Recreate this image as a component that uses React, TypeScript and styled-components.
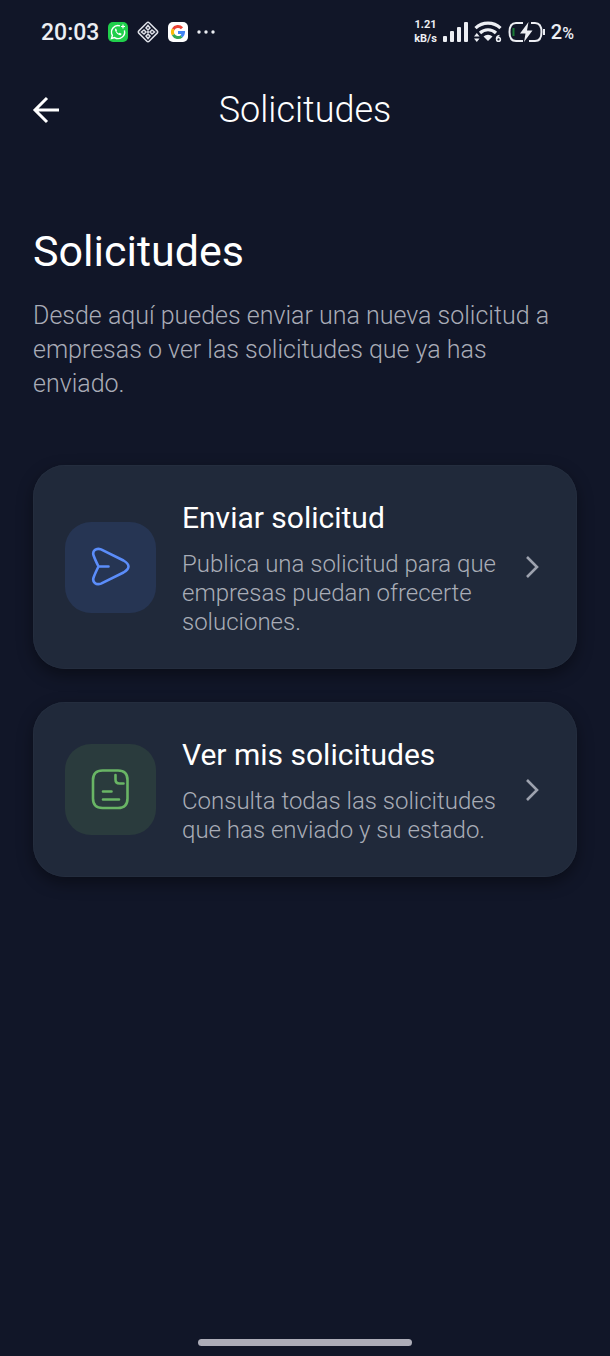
import React from "react";
import styled, { createGlobalStyle } from "styled-components";

const GlobalStyle = createGlobalStyle`
  * { box-sizing: border-box; }
  body {
    margin: 0;
    background: #111628;
    color: #fff;
    font-family: Roboto, "Liberation Sans", sans-serif;
  }
`;

const Screen = styled.div`
  display: flex;
  flex-direction: column;
  min-height: 100vh;
`;

const StatusBar = styled.div`
  display: flex;
  align-items: center;
  justify-content: space-between;
  height: 64px;
  padding: 0 36px 0 41px;
  color: #eceef3;
`;

const StatusGroup = styled.div<{ $gap: number }>`
  display: flex;
  align-items: center;
  gap: ${(p) => p.$gap}px;
`;

const Clock = styled.time`
  font-size: 23px;
  font-weight: 500;
`;

const Speed = styled.div`
  font-size: 11px;
  line-height: 14px;
  font-weight: 700;
  text-align: center;
`;

const Battery = styled.span`
  font-size: 20px;
  font-weight: 500;
  small {
    font-size: 16px;
  }
`;

const AppBar = styled.header`
  display: grid;
  grid-template-columns: 48px 1fr 48px;
  align-items: center;
  height: 92px;
  padding: 0 22px;
`;

const BackButton = styled.button`
  display: flex;
  align-items: center;
  justify-content: center;
  height: 48px;
  padding: 0;
  border: 0;
  background: none;
  color: #fff;
`;

const BarTitle = styled.div`
  font-size: 36px;
  font-weight: 300;
  line-height: 44px;
  text-align: center;
`;

const Main = styled.main`
  display: flex;
  flex: 1;
  flex-direction: column;
  padding: 69px 33px 0;
`;

const Heading = styled.h1`
  margin: 0;
  font-size: 43px;
  line-height: 52px;
  font-weight: 400;
`;

const Intro = styled.p`
  margin: 22px 0 64px;
  color: #a9acb7;
  font-size: 25px;
  line-height: 34px;
  font-weight: 300;
`;

const CardList = styled.nav`
  display: flex;
  flex-direction: column;
  gap: 33px;
`;

const Card = styled.a`
  display: flex;
  align-items: center;
  gap: 18px;
  padding: 32px;
  border-radius: 32px;
  background: #20293a;
  box-shadow: inset 0 0 0 1px #242d3e, 0 6px 16px rgba(0, 0, 0, 0.4);
  color: inherit;
  text-decoration: none;
`;

const IconTile = styled.span<{ $background: string; $color: string }>`
  display: flex;
  flex: none;
  align-items: center;
  justify-content: center;
  width: 91px;
  height: 91px;
  margin-right: 8px;
  border-radius: 26px;
  background: ${(p) => p.$background};
  color: ${(p) => p.$color};
`;

const CardText = styled.span`
  flex: 1;
  min-width: 0;
`;

const CardTitle = styled.span`
  display: block;
  margin-bottom: 11px;
  font-size: 30px;
  line-height: 42px;
  font-weight: 400;
`;

const CardDescription = styled.span`
  display: block;
  color: #a9adb7;
  font-size: 24px;
  line-height: 29px;
  font-weight: 300;
`;

const HomeIndicator = styled.div`
  align-self: center;
  width: 35%;
  height: 7px;
  margin-bottom: 10px;
  border-radius: 4px;
  background: #adadb8;
`;

const WhatsAppIcon = () => (
  <svg width="20" height="20" viewBox="0 0 20 20" fill="none" aria-hidden="true">
    <rect width="20" height="20" rx="5" fill="#20cf4b" />
    <path d="M12 3.8A6.6 6.6 0 0 0 4.4 13.4L3.5 16.5l3.1-.9A6.6 6.6 0 0 0 16.4 8.3" stroke="#fff" strokeWidth="1.4" />
    <path d="M7.1 6.8l1-.3.9 1.9-.6.8c.6 1.1 1.3 1.8 2.4 2.3l.8-.8 1.9 1-.3 1.2c-2.1 1.5-6.7-2.6-6.1-6.1z" fill="#fff" />
    <path d="M15 2.5v4M13 4.5h4" stroke="#fff" strokeWidth="1.2" />
  </svg>
);

const DiamondIcon = () => (
  <svg width="22" height="22" viewBox="0 0 22 22" fill="none" stroke="#dfe1e8" aria-hidden="true">
    <path d="M9.9 1.8 1.8 9.9a1.5 1.5 0 0 0 0 2.2l8.1 8.1a1.5 1.5 0 0 0 2.2 0l8.1-8.1a1.5 1.5 0 0 0 0-2.2l-8.1-8.1a1.5 1.5 0 0 0-2.2 0z" strokeWidth="1.5" />
    <path d="M11 4.5 13 7l-2 2-2-2zM11 13l2 2-2 2.5L9 15zM7 9l2 2-2 2-2.5-2zM15 9l2.5 2-2.5 2-2-2z" strokeWidth="1.5" />
    <circle cx="11" cy="11" r="0.8" fill="#dfe1e8" />
  </svg>
);

const GoogleIcon = () => (
  <svg width="20" height="20" viewBox="0 0 20 20" fill="none" strokeWidth="3" aria-hidden="true">
    <rect width="20" height="20" rx="5" fill="#fff" />
    <path d="M14 6.2A5.6 5.6 0 0 0 5.2 7.2" stroke="#ea4335" />
    <path d="M5.2 7.2a5.6 5.6 0 0 0 0 5.6" stroke="#fbbc05" />
    <path d="M5.2 12.8a5.6 5.6 0 0 0 8.4 1.5" stroke="#34a853" />
    <path d="M13.6 14.3A5.6 5.6 0 0 0 15.5 10.4H10" stroke="#4285f4" />
  </svg>
);

const MoreIcon = () => (
  <svg width="18" height="4" viewBox="0 0 18 4" fill="currentColor" aria-hidden="true">
    <circle cx="2" cy="2" r="1.7" />
    <circle cx="9" cy="2" r="1.7" />
    <circle cx="16" cy="2" r="1.7" />
  </svg>
);

const SignalIcon = () => (
  <svg width="25" height="20" viewBox="0 0 25 20" fill="currentColor" aria-hidden="true">
    <rect x="0" y="14" width="4" height="6" rx="1" />
    <rect x="7" y="9" width="4" height="11" rx="1" />
    <rect x="14" y="5" width="4" height="15" rx="1" />
    <rect x="21" y="0" width="4" height="20" rx="1" />
  </svg>
);

const WifiIcon = () => (
  <svg width="28" height="22" viewBox="0 0 28 22" fill="none" stroke="currentColor" aria-hidden="true">
    <path d="M1.5 7.2a18 18 0 0 1 25 0" strokeWidth="3.2" />
    <path d="M6 12a11.5 11.5 0 0 1 16 0" strokeWidth="3.2" />
    <path d="M9.5 15.5a6.5 6.5 0 0 1 9 0L14 20z" fill="currentColor" stroke="none" />
    <path d="M0 15.5 2.8 12l2.8 3.5zM0 17.5l2.8 3.5 2.8-3.5z" fill="currentColor" stroke="none" />
    <path d="M25.5 14.6c-2 .3-3 1.6-3 3.5" strokeWidth="1.5" />
    <circle cx="24.5" cy="18.4" r="1.9" strokeWidth="1.5" />
  </svg>
);

const BatteryIcon = () => (
  <svg width="37" height="22" viewBox="0 0 37 22" fill="none" stroke="currentColor" aria-hidden="true">
    <path d="M15 2H8Q1.5 2 1.5 11T8 20h7M23 2h4q6.5 0 6.5 9T27 20h-6" strokeWidth="2" />
    <path d="M36 8v6" strokeWidth="2" />
    <path d="M5.5 7v8" stroke="#197b35" strokeWidth="2" />
    <path d="M20.5 1 12 12.5h5.5L16 21l8.5-11.5H19z" fill="currentColor" stroke="none" />
  </svg>
);

const BackIcon = () => (
  <svg width="28" height="28" viewBox="0 0 28 28" fill="none" stroke="currentColor" strokeWidth="3" aria-hidden="true">
    <path d="M27 14H3M15 2 3 14l12 12" />
  </svg>
);

const SendIcon = () => (
  <svg width="40" height="40" viewBox="0 0 40 40" fill="none" stroke="currentColor" strokeWidth="2.6" strokeLinecap="round" strokeLinejoin="round" aria-hidden="true">
    <path d="M10 2.4 32.5 13.5Q42.500 19.500 32.500 25.500L10 36.600C5 38.500 1 35 2.600 30.500Q4 26.500 7.500 19.500 4 12.500 2.600 8.500C1 4 5 .5 10 2.400zM7.500 19.500h10" />
  </svg>
);

const DocumentIcon = () => (
  <svg width="40" height="42" viewBox="0 0 40 42" fill="none" stroke="currentColor" strokeWidth="2.6" strokeLinecap="round" strokeLinejoin="round" aria-hidden="true">
    <path d="M11.500 1.500h15.500q9.500 0 9.500 9.500v18.500q0 9.500-9.500 9.500H11.500q-9.500 0-9.500-9.500V11Q2 1.500 11.500 1.500z" />
    <path d="M24.500 6v4.500q0 4 4 4h4M12 22.500h8.500M12 30.500h16" />
  </svg>
);

const ChevronIcon = () => (
  <svg width="20" height="24" viewBox="0 0 20 24" fill="none" stroke="#9da2ae" strokeWidth="2.6" aria-hidden="true">
    <path d="M2 2 12 12 2 22" />
  </svg>
);

interface ActionCardProps {
  title: string;
  description: string;
  background: string;
  color: string;
  icon: React.ReactNode;
}

const ActionCard = ({ title, description, background, color, icon }: ActionCardProps) => (
  <Card href="#">
    <IconTile $background={background} $color={color}>{icon}</IconTile>
    <CardText>
      <CardTitle>{title}</CardTitle>
      <CardDescription>{description}</CardDescription>
    </CardText>
    <ChevronIcon />
  </Card>
);

export default function App() {
  return (
    <Screen>
      <GlobalStyle />
      <StatusBar>
        <StatusGroup $gap={9}>
          <Clock>20:03</Clock>
          <WhatsAppIcon />
          <DiamondIcon />
          <GoogleIcon />
          <MoreIcon />
        </StatusGroup>
        <StatusGroup $gap={6}>
          <Speed>1.21<br />kB/s</Speed>
          <SignalIcon />
          <WifiIcon />
          <BatteryIcon />
          <Battery>2<small>%</small></Battery>
        </StatusGroup>
      </StatusBar>
      <AppBar>
        <BackButton type="button" aria-label="Volver"><BackIcon /></BackButton>
        <BarTitle>Solicitudes</BarTitle>
      </AppBar>
      <Main>
        <Heading>Solicitudes</Heading>
        <Intro>
          Desde aquí puedes enviar una nueva solicitud a empresas o ver las solicitudes que ya has enviado.
        </Intro>
        <CardList>
          <ActionCard
            title="Enviar solicitud"
            description="Publica una solicitud para que empresas puedan ofrecerte soluciones."
            background="#263553"
            color="#5b8dfa"
            icon={<SendIcon />}
          />
          <ActionCard
            title="Ver mis solicitudes"
            description="Consulta todas las solicitudes que has enviado y su estado."
            background="#2a3b3d"
            color="#69b565"
            icon={<DocumentIcon />}
          />
        </CardList>
      </Main>
      <HomeIndicator />
    </Screen>
  );
}
